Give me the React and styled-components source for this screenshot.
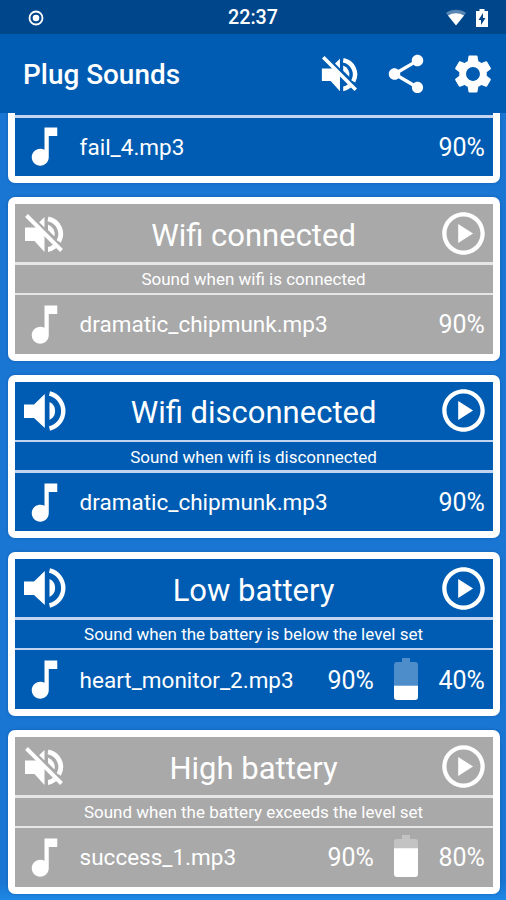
import styled, { createGlobalStyle } from "styled-components";
import {
    MdMusicNote,
    MdOutlinePlayCircle,
    MdSettings,
    MdShare,
} from "react-icons/md";

const GlobalStyle = createGlobalStyle`
    * {
        box-sizing: border-box;
    }

    body {
        margin: 0;
        background: #1976d2;
        color: #fff;
        font-family: Roboto, "Liberation Sans", sans-serif;
    }
`;

const StyledScreen = styled.div`
    display: flex;
    flex-direction: column;
    width: 506px;
    height: 900px;
    overflow: hidden;
    background: linear-gradient(#1976d2 0 98%, #1e88e5 100%);
`;

const StyledStatusBar = styled.header`
    display: grid;
    grid-template-columns: 1fr auto 1fr;
    align-items: center;
    flex: none;
    height: 34px;
    padding: 1px 18px 0;
    background: #00468b;
`;

const StyledRecordIcon = styled.svg`
    margin-left: 10px;
`;

const StyledClock = styled.time`
    padding-top: 1px;
    font-size: 19.7px;
    font-weight: 500;
    line-height: 22px;
`;

const StyledStatusIcons = styled.div`
    display: flex;
    align-items: center;
    justify-content: flex-end;
    gap: 9px;
`;

const StyledAppBar = styled.div`
    display: flex;
    align-items: center;
    flex: none;
    height: 79px;
    padding: 0 10px 0 23px;
    background: #005cb2;
`;

const StyledAppTitle = styled.h1`
    flex: 1;
    margin: 0;
    padding-top: 3px;
    font-size: 27.9px;
    font-weight: 500;
    line-height: 32px;
`;

const StyledActions = styled.div`
    display: grid;
    grid-template-columns: 63px 67.5px 46px;
    align-items: center;
`;

const StyledList = styled.main`
    display: flex;
    flex: 1;
    flex-direction: column;
    justify-content: flex-end;
    gap: 14.1px;
    min-height: 0;
    padding: 0 6.5px 6.5px 7.6px;
    overflow: hidden;
`;

const StyledCard = styled.section`
    flex: none;
    height: 163.5px;
    padding: 7px;
    border-radius: 7px;
    background: #fff;
    box-shadow: 0 0 3px rgba(0, 50, 120, 0.35);
`;

const StyledCardBody = styled.div`
    display: grid;
    grid-template-rows: 58px 28px 58.5px;
    row-gap: 2.5px;
    height: 100%;
    background: ${({ $on }) => ($on ? "#c3d4f0" : "#e6e6e6")};

    > * {
        background: ${({ $on }) => ($on ? "#005cb2" : "#a9a9a9")};
    }
`;

const StyledTitleRow = styled.div`
    display: grid;
    grid-template-columns: 42px 1fr 50px;
    align-items: center;
    padding: 0 5px 0 8px;
`;

const StyledTitle = styled.h2`
    margin: 0;
    padding: 5px 0 0 5px;
    font-size: 31px;
    font-weight: 400;
    line-height: 36px;
    text-align: center;
`;

const StyledDescription = styled.p`
    display: flex;
    align-items: center;
    justify-content: center;
    margin: 0;
    padding-top: 1px;
    font-size: 17px;
    white-space: nowrap;
`;

const StyledSoundRow = styled.div`
    display: flex;
    align-items: center;
    padding: 0 8px 0 4px;
`;

const StyledFileName = styled.span`
    flex: 1;
    margin-left: 10px;
    font-size: 22.5px;
    white-space: nowrap;
`;

const StyledPercent = styled.span`
    width: 46px;
    padding-top: 1px;
    font-size: 25px;
    text-align: right;
    white-space: nowrap;
`;

const StyledBattery = styled.svg`
    flex: none;
    margin: 0 21px 2px 20px;
`;

const SpeakerOn = () => (
    <svg width="43" height="42" viewBox="0 0 43 42" fill="#fff">
        <path d="M1 14.500h10L21.800 4v34L11 28H1z" />
        <path d="M26.500 12a10 10 0 0 1 0 18z" />
        <path
            d="M26.500 3.500a18 18 0 0 1 0 35"
            fill="none"
            stroke="#fff"
            strokeWidth="4.400"
        />
    </svg>
);

const SpeakerOff = ({ size = 42 }) => (
    <svg width={size} height={size} viewBox="0 0 42 42" fill="#fff">
        <path d="M2 15.500h12l7.500 7.500v17L11.500 29H2z" />
        <path d="M21.500 5v10.500L16.200 10.300z" />
        <path d="M3.500 3.500 38.500 38.500" stroke="#fff" strokeWidth="3.900" />
        <path
            d="M25 6.800A15.500 15.500 0 0 1 35.800 29.500"
            fill="none"
            stroke="#fff"
            strokeWidth="4.800"
        />
        <path d="M25 12.500a10.500 10.500 0 0 1 6.500 12L25 18z" />
        <path d="M25 35q3-.5 5-2.500l3.500 3.500q-4 3-8.500 4z" />
    </svg>
);

const Battery = ({ level }) => {
    const top = 42 - (level / 100) * 36;
    return (
        <StyledBattery width="24" height="42" viewBox="0 0 24 42" fill="#fff">
            <clipPath id={`battery-${level}`}>
                <path d="M8 0h8v4h5a3 3 0 0 1 3 3v32a3 3 0 0 1-3 3H3a3 3 0 0 1-3-3V7a3 3 0 0 1 3-3h5z" />
            </clipPath>
            <g clipPath={`url(#battery-${level})`}>
                <rect width="24" height={top} opacity="0.3" />
                <rect y={top} width="24" height={42 - top} />
            </g>
        </StyledBattery>
    );
};

const StatusIcons = () => (
    <StyledStatusIcons>
        <svg width="22" height="18" viewBox="0 0 22 18" fill="#fff">
            <path d="M1 4a17 17 0 0 1 20 0L11 16z" opacity="0.35" />
            <path d="M3 6.500q8-4.500 16 0L11 16.500z" />
        </svg>
        <svg width="12" height="18" viewBox="0 0 12 18">
            <path d="M3.500 0h5v2H12v16H0V2h3.500z" fill="#fff" />
            <path d="M7 4v5h2.500L5 16v-5H2.500z" fill="#00468b" />
        </svg>
    </StyledStatusIcons>
);

const SoundCard = ({ title, description, file, volume, battery, on }) => (
    <StyledCard>
        <StyledCardBody $on={on}>
            <StyledTitleRow>
                {on ? <SpeakerOn /> : <SpeakerOff />}
                <StyledTitle>{title}</StyledTitle>
                <MdOutlinePlayCircle size={51} />
            </StyledTitleRow>
            <StyledDescription>{description}</StyledDescription>
            <StyledSoundRow>
                <MdMusicNote size={51} />
                <StyledFileName>{file}</StyledFileName>
                <StyledPercent>{volume}%</StyledPercent>
                {battery ? (
                    <>
                        <Battery level={battery} />
                        <StyledPercent>{battery}%</StyledPercent>
                    </>
                ) : null}
            </StyledSoundRow>
        </StyledCardBody>
    </StyledCard>
);

const sounds = [
    { file: "fail_4.mp3", volume: 90, on: true },
    {
        title: "Wifi connected",
        description: "Sound when wifi is connected",
        file: "dramatic_chipmunk.mp3",
        volume: 90,
        on: false,
    },
    {
        title: "Wifi disconnected",
        description: "Sound when wifi is disconnected",
        file: "dramatic_chipmunk.mp3",
        volume: 90,
        on: true,
    },
    {
        title: "Low battery",
        description: "Sound when the battery is below the level set",
        file: "heart_monitor_2.mp3",
        volume: 90,
        battery: 40,
        on: true,
    },
    {
        title: "High battery",
        description: "Sound when the battery exceeds the level set",
        file: "success_1.mp3",
        volume: 90,
        battery: 80,
        on: false,
    },
];

export default function App() {
    return (
        <>
            <GlobalStyle />
            <StyledScreen>
                <StyledStatusBar>
                    <StyledRecordIcon width="16" height="16" viewBox="0 0 16 16" fill="#fff">
                        <circle cx="8" cy="8" r="6.500" fill="none" stroke="#fff" strokeWidth="1.800" />
                        <circle cx="8" cy="8" r="3.300" />
                    </StyledRecordIcon>
                    <StyledClock>22:37</StyledClock>
                    <StatusIcons />
                </StyledStatusBar>
                <StyledAppBar>
                    <StyledAppTitle>Plug Sounds</StyledAppTitle>
                    <StyledActions>
                        <SpeakerOff size={39} />
                        <MdShare size={46} />
                        <MdSettings size={46} />
                    </StyledActions>
                </StyledAppBar>
                <StyledList>
                    {sounds.map((sound, idx) => (
                        <SoundCard key={idx} {...sound} />
                    ))}
                </StyledList>
            </StyledScreen>
        </>
    );
}
